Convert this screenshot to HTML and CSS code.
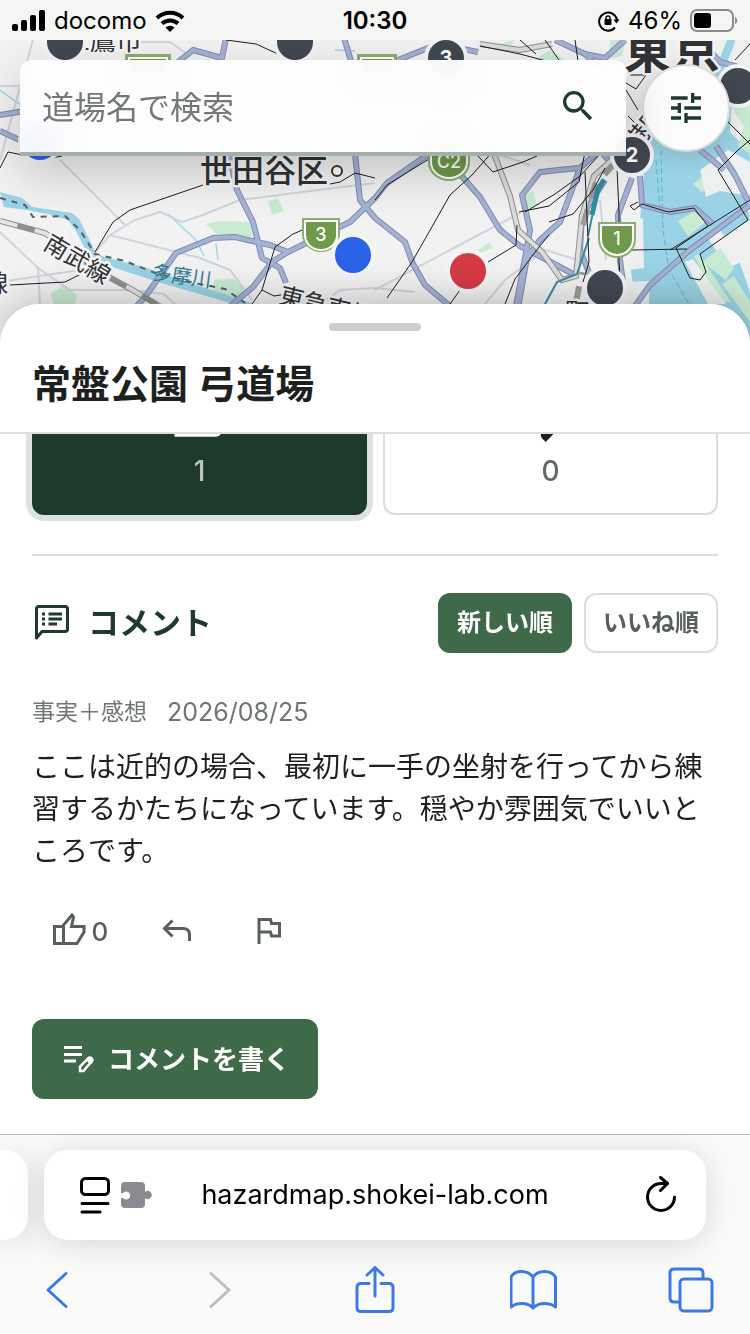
FILE: index.html
```html
<!DOCTYPE html>
<html lang="ja">
<head>
  <meta charset="UTF-8" />
  <meta name="viewport" content="width=device-width, initial-scale=1.0" />
  <title>常盤公園 弓道場</title>
  <link rel="stylesheet" href="styles.css">
</head>
<body>
  <header class="status-bar">
    <div class="status-left">
      <svg width="34" height="22" viewBox="0 0 34 22" aria-hidden="true">
        <rect x="0" y="14" width="6" height="7" rx="2" />
        <rect x="9" y="10" width="6" height="11" rx="2" />
        <rect x="18" y="5" width="6" height="16" rx="2" />
        <rect x="27" y="0" width="6" height="21" rx="2" />
      </svg>
      <span>docomo</span>
      <svg width="30" height="22" viewBox="0 0 30 22" fill="none" stroke="#000" stroke-width="4" aria-hidden="true">
        <path d="M2 8a19 19 0 0 1 26 0" />
        <path d="M7 13.500a12 12 0 0 1 16 0" />
        <path d="M10.500 17.500a6.500 6.500 0 0 1 9 0L15 22z" fill="#000" stroke="none" />
      </svg>
    </div>
    <strong class="status-time">10:30</strong>
    <div class="status-right">
      <svg width="22" height="22" viewBox="0 0 22 22" fill="none" stroke="#000" stroke-width="2" aria-hidden="true">
        <path d="M17 17.500A9 9 0 1 1 19 10" />
        <path d="M15.500 9.500h6l-3 4z" fill="#000" stroke="none" />
        <rect x="6.500" y="9" width="7" height="6" rx="1" fill="#000" stroke="none" />
        <path d="M8 10V8a2 2 0 0 1 4 0v2" stroke-width="1.500" />
      </svg>
      <span>46%</span>
      <svg width="48" height="23" viewBox="0 0 48 23" aria-hidden="true">
        <rect x="1" y="1" width="42" height="21" rx="6" fill="none" stroke="#8c8c8c" stroke-width="2" />
        <rect x="4" y="4" width="17" height="15" rx="3" />
        <path d="M45 8c3 1 3 6 0 7z" fill="#8c8c8c" />
      </svg>
    </div>
  </header>

  <section class="map" aria-label="地図">
    <svg class="map-canvas" viewBox="0 40 750 304" preserveAspectRatio="xMidYMid slice">
      <rect y="40" width="750" height="304" fill="#f2f2f3" />

      <!-- bay -->
      <path class="water" d="M643 40l-8 55-5 60 14 20-4 45-10 45 4 25-10 54h126V40z" />
      <path class="land" d="M628 40h122v18l-20 10-60 30-22 42-22-10zM740 40h10v60l-15 5z" />
      <path class="water" d="M727 40h9l-18 45h-9z" />
      <path class="land" d="M636 220l7-2 1 50-17 2zM627 282l23-1-2 40h-24zM735 40h15v112l-20-20z" />
      <path class="park" d="M732 108l18-14v60l-12-8 6-20zM693 184l34-26 6 8-31 26zM678 221l18-11 10 12-18 14z" />
      <path class="land" d="M700 170l28-20 22 12v34l-30-5-14 6zM708 238l42-30v50l-22 10z" />
      <path class="park" d="M702 262l18-14 14 20-8 12zM722 284l12-8 16 26v20zM694 256l5-2 32 48h-14z" />
      <path class="land" d="M685 262l8-3 33 45h-18zM738 258l12-6v40z" />
      <path class="water" d="M718 226l30-18 2 12-26 16zM702 150l12 0-20 30-6-4z" />
      <path d="M661 150l2 80 6 40 20 34M656 160l4 50" fill="none" stroke="#5cb5cd" stroke-width="1" stroke-dasharray="6 3" />

      <!-- parks -->
      <path class="park" d="M206 224l14-3 30 1 2 15-34-2zM268 201l10-2 6 12-12 4zM214 280l20-1 10 10-5 10-26-8zM51 293l14-8 12 10-2 9-22 0zM525 195l8-4 4 14-10 4zM478 250l12-8 2 6-12 5zM500 44l14-4-4 8zM535 60l14-10 16 10zM610 40h16l-4 16-12 2z" />

      <!-- river -->
      <path class="water" d="M0 192l22 6 10 9 40 6 7 6 17 34 8 4 40 10 35 12 72 24v6l-90-26-55-18-16-6-14-28-8-11-20-6-22-4-22-3z" />
      <path d="M0 90l22 16M168 214l28 26 8 16M216 244l2 16M468 185l40 50 50 36M335 50l20 1" fill="none" stroke="#9ad8e6" stroke-width="1.500" />

      <g class="minor-road">
        <path d="M0 86h38M33 40L0 160M60 160l15 15 50 50M110 235l25-15 25-8 22 10 18-6 40-16 70-9 65-8" />
        <path d="M110 235l90 23M0 232l38 36 32 22 60 0 34 4 20 18M0 282l80-12 30-35M38 268l2 36M200 258l30 12 22 30" />
        <path d="M375 290l75-40 70-37M320 304l20-14 35-2 40 4M485 304l20-24 40-30 40 12M130 42l40 0 20 14M500 155l30 10M600 200l6 60" />
      </g>

      <path class="road-case" d="M135 308l10-11 31-44 37-15 22-1 35 8 18 7 37-18 25-12 25-24 12-15 43-30M229 154l8 36 16 32 9 36 18 10 6 15M228 308l25-21 19-25 16-10M355 154l5 46 15 18 30 24 8 22 12 21 26 22M458 172l22 25 20 33 20 16 25 13 30 16M600 150l-20 18-20 54-20 18-13 18-9 50M578 168l-38 4-18 23 8 35-5 28-9 48M625 320l25-35 40-35 60-45M716 146l19 29 15 30M640 176l2 29 28 7 25-4 18 16M632 178l-14 37 2 45 4 30M605 180l-23 35-2 35 12 30M600 150l10 12 24-6M178 62l15-12 29 8 4-20M344 38l8 26M398 60l40-16 40 8M555 40l30 14 20 4 20-18M585 54l18 18M700 40l20 22 30 8M0 115l24-4M0 131l24 11M700 150l24 20" />
      <path class="road" d="M135 308l10-11 31-44 37-15 22-1 35 8 18 7 37-18 25-12 25-24 12-15 43-30M229 154l8 36 16 32 9 36 18 10 6 15M228 308l25-21 19-25 16-10M355 154l5 46 15 18 30 24 8 22 12 21 26 22M458 172l22 25 20 33 20 16 25 13 30 16M600 150l-20 18-20 54-20 18-13 18-9 50M578 168l-38 4-18 23 8 35-5 28-9 48M625 320l25-35 40-35 60-45M716 146l19 29 15 30M640 176l2 29 28 7 25-4 18 16M632 178l-14 37 2 45 4 30M605 180l-23 35-2 35 12 30M600 150l10 12 24-6M178 62l15-12 29 8 4-20M344 38l8 26M398 60l40-16 40 8M555 40l30 14 20 4 20-18M585 54l18 18M700 40l20 22 30 8M0 115l24-4M0 131l24 11M700 150l24 20" />

      <!-- railways -->
      <path d="M494 154l16 42 8 34 24 22 20 28 14-4 6-60 12-40 20-18M480 44l40 6 32-6" fill="none" stroke="#8f8f8f" stroke-width="6" />
      <path d="M494 154l16 42 8 34 24 22 20 28 14-4 6-60 12-40 20-18M480 44l40 6 32-6" fill="none" stroke="#dcdcdc" stroke-width="4" />
      <path d="M583 225l12-40 18-20M576 302l6-30" fill="none" stroke="#9b9b9b" stroke-width="6" stroke-dasharray="16 12" />
      <path d="M588 236l8-38 8-18M545 304l12-22 20-8 12-36" fill="none" stroke="#358ca0" stroke-width="2" />
      <path d="M592 215l6-26 6-9" fill="none" stroke="#358ca0" stroke-width="5" />
      <g class="rail">
        <path d="M95 252l18-30 17-12 73-25M330 184l10-2 15-9 20 5M10 285l55-3 18-9M252 304l10-14 13-43 18-13 14-6M0 168l8-16 20 4M40 160l22-4M387 298l25-36 38-67 22-20 22-25M375 200l12-15 58-36M477 155l16 17 30-10 14-6M488 262l28-17 1-20M519 212l30-6 30-24 6-30M525 212l30-18 25-18 20-22M549 222l24-8 20-24 12-22M262 290l12 6 20-3M226 40l30 4 22 10M520 40l16 14M585 172l4 90-6 20M505 304l10-25 24-32 10-12M450 304l10-14" />
        <path d="M617 168l2 44 0 50 2 30M632 250l55-1M638 202l-8 4 4 4 8-6 26 8 26-4 14 18-32 22 14 30 10 2 6-8-6-18 48-34-30-50 20-20 12-10M670 250l80-50M575 40l4 28M545 40l14 20M480 46l40 8 30 8M735 60l15-16M630 75l16 0-10 14-10-6M626 90l12 20M628 116l20 20M728 122l22 22" />
      </g>
      <path d="M0 221l45 12 60 42 26 14 30 18" fill="none" stroke="#8f8f8f" stroke-width="6" />
      <path d="M0 221l45 12 60 42 26 14 30 18" fill="none" stroke="#e4e4e4" stroke-width="4" stroke-dasharray="18 18" />
      <path d="M0 198l25 7 8 12 32-1 15 14 15 24 30 7 30 12 40 10 30 6 20 14" fill="none" stroke="#5a5f63" stroke-width="2" stroke-dasharray="6 6" />

      <!-- place labels -->
      <g class="labels">
        <text class="label-city" x="200" y="182">世田谷区</text>
        <text class="label-metro" x="624" y="68">東京</text>
        <text class="label-town" x="64" y="50">三鷹市</text>
        <text class="label-line" transform="translate(42 248) rotate(31)">南武線</text>
        <text class="label-line" x="-16" y="292">線</text>
        <text class="label-line" transform="translate(278 303) rotate(14)">東急東横線</text>
        <text class="label-line" transform="translate(636 152) rotate(-50)">港区</text>
        <text class="label-line" x="565" y="320">町VC</text>
        <text class="label-river" transform="translate(151 279) rotate(8)">多摩川</text>
      </g>
      <circle cx="337" cy="171" r="5" fill="#fff" stroke="#333" stroke-width="2" />

      <!-- expressway shields -->
      <g class="shield">
        <path class="shield-edge" d="M304 220h34v14a17 16 0 0 1-34 0z" />
        <path d="M305 221h32v14a16 15 0 0 1-32 0z" />
        <text x="321" y="241">3</text>
        <path class="shield-edge" d="M430 146h38v16a19 17 0 0 1-38 0z" />
        <path d="M431 148h36v14a18 16 0 0 1-36 0z" />
        <text x="449" y="168">C2</text>
        <path class="shield-edge" d="M600 224h34v15a17 17 0 0 1-34 0z" />
        <path d="M601 225h32v14a16 16 0 0 1-32 0z" />
        <text x="617" y="245">1</text>
        <path class="shield-edge" d="M127 56h42v20h-42z" />
        <path d="M129 58h38v16h-38z" />
        <path class="shield-edge" d="M359 56h36v20h-36z" />
        <path d="M361 58h32v16h-32z" />
      </g>
    </svg>

    <button class="pin pin-a" aria-label="道場"></button>
    <button class="pin pin-b" aria-label="道場"></button>
    <button class="pin pin-c">3</button>
    <button class="pin pin-d" aria-label="道場"></button>
    <button class="pin pin-e">2</button>
    <button class="pin pin-blue pin-f" aria-label="道場"></button>
    <button class="pin pin-blue pin-g" aria-label="道場"></button>
    <button class="pin pin-red pin-h" aria-label="道場"></button>
    <button class="pin pin-i" aria-label="道場"></button>

    <div class="map-controls">
      <form class="search">
        <input type="text" placeholder="道場名で検索" aria-label="道場名で検索" />
        <button type="button" aria-label="検索">
          <svg width="40" height="40" viewBox="0 0 24 24" fill="#1e3a2c"><path d="M15.500 14h-.79l-.28-.27A6.470 6.470 0 0 0 16 9.500 6.500 6.500 0 1 0 9.500 16c1.610 0 3.090-.59 4.230-1.570l.27.28v.79l5 4.990L20.490 19l-4.990-5zm-6 0C7.010 14 5 11.990 5 9.500S7.010 5 9.500 5 14 7.010 14 9.500 11.990 14 9.500 14z" /></svg>
        </button>
      </form>
      <button class="filter-btn" aria-label="絞り込み">
        <svg width="40" height="40" viewBox="0 0 24 24" fill="#1e3a2c"><path d="M3 17v2h6v-2H3zM3 5v2h10V5H3zm10 16v-2h8v-2h-8v-2h-2v6h2zM7 9v2H3v2h4v2h2V9H7zm14 4v-2H11v2h10zm-6-4h2V7h4V5h-4V3h-2v6z" /></svg>
      </button>
    </div>
  </section>

  <main class="sheet">
    <div class="sheet-header">
      <div class="handle"></div>
      <h1>常盤公園 弓道場</h1>
    </div>
    <div class="sheet-body">
      <div class="votes">
        <button class="vote active">
          <svg width="72" height="72" viewBox="0 -960 960 960" fill="#fff"><path d="M690-110H140v-530h140l280-280 50 50q16 16 16 42v14l-44 174h258q32 0 56 24t24 56v80q0 15-6 30L764-158q-22 48-74 48Z" /></svg>
          <span>1</span>
        </button>
        <button class="vote">
          <svg width="72" height="72" viewBox="0 -960 960 960" fill="#1c211e"><path d="M240-840h580v520H680L410-40l-50-50q-16-16-16-42v-14l44-174H120q-32 0-56-24t-24-56v-80q0-15 6-30l120-282q22-48 74-48Z" /></svg>
          <span>0</span>
        </button>
      </div>

      <section class="comments">
        <div class="comments-head">
          <h2>
            <svg width="40" height="40" viewBox="0 0 40 40" fill="none" stroke="#1e3a2c" stroke-width="3" stroke-linejoin="round">
              <path d="M4.500 35V6q0-2.500 2.500-2.500h26q2.500 0 2.500 2.500v20q0 2.500-2.500 2.500H10z" />
              <path d="M10 11h3M10 16h3M10 21h3M16.500 11H30M16.500 16H30M16.500 21H25" />
            </svg>
            コメント
          </h2>
          <div class="sort">
            <button class="sort-btn active">新しい順</button>
            <button class="sort-btn">いいね順</button>
          </div>
        </div>

        <article class="comment">
          <div class="comment-meta"><span>事実＋感想</span><time datetime="2026-08-25">2026/08/25</time></div>
          <p>ここは近的の場合、最初に一手の坐射を行ってから練習するかたちになっています。穏やか雰囲気でいいところです。</p>
          <div class="comment-actions">
            <button aria-label="いいね">
              <svg width="36" height="36" viewBox="0 0 36 36" fill="none" stroke="#59605c" stroke-width="3"><path d="M4.500 13.500h9v17h-9zM13.500 30.500H27L34 19v-5.500H21.500l2-9.500-1.500-2-8.500 10z" /></svg>
              <span>0</span>
            </button>
            <button aria-label="返信">
              <svg width="36" height="36" viewBox="0 0 36 36" fill="none" stroke="#59605c" stroke-width="3"><path d="M12.500 7.500l-8 8 8 8M4.500 15.500H23q6.500 0 6.500 6.500v6" /></svg>
            </button>
            <button aria-label="報告">
              <svg width="36" height="36" viewBox="0 0 36 36" fill="none" stroke="#59605c" stroke-width="3"><path d="M7 31V6.500h11.500l1 4h8V23h-8l-1-4H7" /></svg>
            </button>
          </div>
        </article>

        <button class="write-btn">
          <svg width="32" height="32" viewBox="0 0 32 32" fill="none" stroke="#fff" stroke-width="3">
            <path d="M2 4.500h18M2 11.500h18M2 18h12" />
            <path d="M18 28v-4.500l8.500-8.500q1.500-1 3 .5l.5.500q1 1.500-.5 2.500L21.500 28z" stroke-width="2.500" />
            <path d="M25 15.500q2-1.500 4 .5t1.500 4l-2 1.500-4-4z" fill="#fff" stroke="none" />
          </svg>
          コメントを書く
        </button>
      </section>
    </div>
  </main>

  <footer class="browser">
    <div class="address-row">
      <div class="prev-tab"></div>
      <div class="address">
        <div class="address-icons">
          <svg width="30" height="38" viewBox="0 0 30 38" fill="none" stroke="#000" stroke-width="3" stroke-linecap="round">
            <rect x="1.500" y="2.500" width="27" height="16" rx="4" /><path d="M2 27.500h26M2 36h18" />
          </svg>
          <svg width="32" height="26" viewBox="0 0 32 26" fill="#8a8a90">
            <path d="M4 0h16q4 0 4 4v6a4 4 0 1 1 0 6v6q0 4-4 4H4q-4 0-4-4v-6h2a4 4 0 1 0 0-5H0V4q0-4 4-4z" />
          </svg>
        </div>
        <span class="address-url">hazardmap.shokei-lab.com</span>
        <button class="reload" aria-label="再読み込み">
          <svg width="32" height="38" viewBox="0 0 32 38" fill="none" stroke="#000" stroke-width="3" stroke-linecap="round" stroke-linejoin="round"><path d="M28.500 21A13.500 13.500 0 1 1 15 7.500h6M14.500 1.500l7 6-7 7" /></svg>
        </button>
      </div>
    </div>
    <nav class="toolbar">
      <button aria-label="戻る"><svg width="48" height="48" viewBox="0 0 48 48"><path d="M32 7.500L14 24l18 16.500" /></svg></button>
      <button aria-label="進む" class="off"><svg width="48" height="48" viewBox="0 0 48 48"><path d="M18 7.500L36 24 18 40.500" /></svg></button>
      <button aria-label="共有"><svg width="48" height="48" viewBox="0 0 48 48"><path d="M18 17.500h-8q-4 0-4 4v20q0 4 4 4h28q4 0 4-4v-20q0-4-4-4h-8M24 30V1.500M16 9l8-7.500L32 9" /></svg></button>
      <button aria-label="ブックマーク"><svg width="48" height="48" viewBox="0 0 48 48"><path d="M23 11Q19 5.500 11.500 5.500T1 11v30q4-3.500 11-3.500T23 42q4.500-4.500 11.500-4.500t11 3.500V11q-3.500-5.500-11-5.500T23 11zv31" /></svg></button>
      <button aria-label="タブ"><svg width="48" height="48" viewBox="0 0 48 48"><path d="M11 36H6q-4 0-4-4V7q0-4 4-4h25q4 0 4 4v5" /><rect x="12" y="13" width="32" height="32" rx="4" /></svg></button>
    </nav>
  </footer>
</body>
</html>
```
FILE: styles.css
```css
* {
  box-sizing: border-box;
}
body {
  margin: 0;
  min-height: 100vh;
  display: flex;
  flex-direction: column;
  font-family: Inter, "Noto Sans CJK JP", sans-serif;
  line-height: 1.5;
  color: #1c211e;
  background: #fff;
}
button {
  display: flex;
  align-items: center;
  justify-content: center;
  padding: 0;
  border: 0;
  background: none;
  font-family: inherit;
  line-height: inherit;
  color: inherit;
}
svg {
  flex: none;
}

/* status bar */
.status-bar {
  display: grid;
  grid-template-columns: 1fr auto 1fr;
  align-items: center;
  height: 40px;
  padding: 1px 12px 0;
  background: #f5f5f3;
  color: #000;
  font-size: 24px;
}
.status-left,
.status-right {
  display: flex;
  align-items: center;
  gap: 8px;
}
.status-right {
  justify-content: flex-end;
}
.status-time {
  font-weight: 600;
}

/* map */
.map {
  position: relative;
  height: 304px;
  overflow: hidden;
}
.map-canvas {
  position: absolute;
  width: 100%;
  height: 100%;
}
.water {
  fill: #9ad3e6;
}
.land {
  fill: #eef0f0;
}
.park {
  fill: #c8ebd2;
}
.minor-road,
.road-case,
.road,
.rail {
  fill: none;
  stroke-linejoin: round;
}
.minor-road {
  stroke: #d0d4de;
  stroke-width: 2;
}
.road-case {
  stroke: #7e8cb4;
  stroke-width: 6;
}
.road {
  stroke: #a6b2d3;
  stroke-width: 4;
}
.rail {
  stroke: #1d1d1f;
  stroke-width: 1;
}
.labels {
  fill: #303236;
  stroke: #f6f6f6;
  stroke-width: 5px;
  stroke-linejoin: round;
  paint-order: stroke;
}
.label-city {
  font-size: 32px;
  font-weight: 500;
}
.label-metro {
  font-size: 48px;
  font-weight: 700;
}
.label-town {
  font-size: 26px;
}
.label-line {
  font-size: 24px;
}
.label-river {
  font-size: 20px;
  fill: #2e8296;
  stroke: none;
}
.shield {
  fill: #6f9a49;
  stroke: #fff;
  stroke-width: 2px;
}
.shield .shield-edge {
  stroke: #8dab74;
  stroke-width: 4px;
}
.shield text {
  fill: #fff;
  stroke: none;
  font-size: 18px;
  font-weight: 500;
  text-anchor: middle;
}

.pin {
  position: absolute;
  width: 44px;
  height: 44px;
  border: 4px solid #f4f5f6;
  border-radius: 50%;
  background: #424852;
  color: #fff;
  font-size: 20px;
  font-weight: 700;
}
.pin-blue {
  background: #2a63e8;
}
.pin-red {
  background: #d63a44;
}
.pin-a { left: 43px; top: -20px; }
.pin-b { left: 273px; top: -20px; }
.pin-c { left: 424px; top: -4px; }
.pin-d { left: 716px; top: 24px; }
.pin-e { left: 610px; top: 93px; }
.pin-f { left: 18px; top: 80px; }
.pin-g { left: 331px; top: 193px; }
.pin-h { left: 446px; top: 209px; }
.pin-i { left: 583px; top: 226px; }

.map-controls {
  position: absolute;
  top: 20px;
  left: 20px;
  right: 20px;
  display: flex;
  align-items: center;
  gap: 16px;
}
.search {
  flex: 1;
  min-width: 0;
  display: flex;
  align-items: center;
  height: 96px;
  padding: 0 4px 0 22px;
  border-bottom: 4px solid #a3b0aa;
  border-radius: 12px 12px 0 0;
  background: rgba(253, 253, 254, 0.95);
  backdrop-filter: blur(20px);
  box-shadow: 0 16px 48px rgba(0, 0, 0, 0.2);
}
.search input {
  flex: 1;
  min-width: 0;
  height: 64px;
  padding: 2px 0 0;
  border: 0;
  outline: 0;
  background: none;
  font-family: inherit;
  font-size: 32px;
}
.search input::placeholder {
  color: #737875;
}
.search button {
  flex: none;
  width: 88px;
  height: 88px;
  border-radius: 50%;
  background: #fefefe;
}
.filter-btn {
  flex: none;
  width: 88px;
  height: 88px;
  border: 2px solid #d9dddb;
  border-radius: 50%;
  background: #fcfcfc;
  box-shadow: 0 4px 24px rgba(0, 0, 0, 0.16);
}

/* bottom sheet */
.sheet {
  position: relative;
  flex: 1;
  margin-top: -40px;
  border-radius: 40px 40px 0 0;
  background: #fff;
  box-shadow: 0 -4px 40px rgba(0, 0, 0, 0.24);
}
.sheet-header {
  position: relative;
  height: 130px;
  padding: 19px 32px 0;
  border-bottom: 2px solid #dcdfdd;
  border-radius: 40px 40px 0 0;
  background: #fff;
}
.handle {
  width: 92px;
  height: 8px;
  margin: 0 auto;
  border-radius: 4px;
  background: #cbd0cd;
}
h1 {
  margin: 28px 0 0;
  font-size: 39px;
  line-height: 50px;
  font-weight: 700;
}
.sheet-body {
  overflow: hidden;
  padding: 0 32px 35px;
}
.votes {
  display: grid;
  grid-template-columns: 1fr 1fr;
  gap: 16px;
  margin-top: -85px;
}
.vote {
  flex-direction: column;
  gap: 6px;
  padding: 22px 0;
  border: 2px solid #d9dddb;
  border-radius: 12px;
  color: #626865;
  font-size: 28px;
  font-weight: 500;
  line-height: 40px;
}
.vote.active {
  border-color: #1e3a2c;
  background: #1e3a2c;
  color: #bcc5c0;
  box-shadow: 0 0 0 6px #dde1df;
}
.comments {
  margin-top: 39px;
  padding-top: 37px;
  border-top: 2px solid #dcdfdd;
}
.comments-head {
  display: flex;
  align-items: center;
  justify-content: space-between;
}
h2 {
  display: flex;
  align-items: center;
  gap: 16px;
  margin: 0;
  color: #1e3a2c;
  font-size: 31px;
  font-weight: 700;
}
.sort {
  display: flex;
  gap: 12px;
}
.sort-btn {
  height: 60px;
  padding: 0 17px;
  border: 2px solid #d9dddb;
  border-radius: 12px;
  color: #59605c;
  font-size: 24px;
  font-weight: 600;
}
.sort-btn.active {
  border-color: #3f6a4a;
  background: #3f6a4a;
  color: #fff;
}
.comment-meta {
  display: flex;
  align-items: center;
  gap: 20px;
  margin-top: 44px;
  color: #6f7572;
  font-size: 23px;
  line-height: 30px;
}
.comment-meta time {
  font-size: 25px;
}
.comment p {
  margin: 19px 0;
  font-size: 28px;
  line-height: 42px;
}
.comment-actions {
  display: flex;
  gap: 12px;
}
.comment-actions button {
  width: 80px;
  height: 80px;
  gap: 6px;
  color: #59605c;
  font-size: 26px;
  font-weight: 500;
}
.comment-actions button:first-child {
  width: 94px;
}
.write-btn {
  height: 80px;
  margin-top: 48px;
  padding: 0 28px 0 30px;
  gap: 14px;
  border-radius: 12px;
  background: #3f6a4a;
  color: #fff;
  font-size: 26px;
  font-weight: 600;
}

/* browser chrome */
.browser {
  position: relative;
  border-top: 1px solid #b9b9b9;
  background: #fafafa;
  overflow: hidden;
}
.address-row {
  display: flex;
  gap: 16px;
  padding: 15px 44px 0 0;
}
.prev-tab,
.address {
  height: 90px;
  background: #fff;
  box-shadow: 0 4px 32px rgba(0, 0, 0, 0.14);
}
.prev-tab {
  width: 28px;
  border-radius: 0 24px 24px 0;
}
.address {
  flex: 1;
  display: grid;
  grid-template-columns: 1fr auto 1fr;
  align-items: center;
  padding: 0 28px;
  border-radius: 24px;
  color: #000;
  font-size: 27px;
}
.address-icons {
  display: flex;
  align-items: center;
  gap: 11px;
  padding-left: 8px;
}
.reload {
  justify-self: end;
}
.toolbar {
  display: flex;
  justify-content: space-between;
  align-items: center;
  height: 94px;
  padding: 6px 28px 0;
}
.toolbar button {
  width: 60px;
  height: 60px;
}
.toolbar svg {
  fill: none;
  stroke: #3b7ae6;
  stroke-width: 3;
  stroke-linecap: round;
  stroke-linejoin: round;
}
.toolbar .off svg {
  stroke: #bdbdbd;
}
```
